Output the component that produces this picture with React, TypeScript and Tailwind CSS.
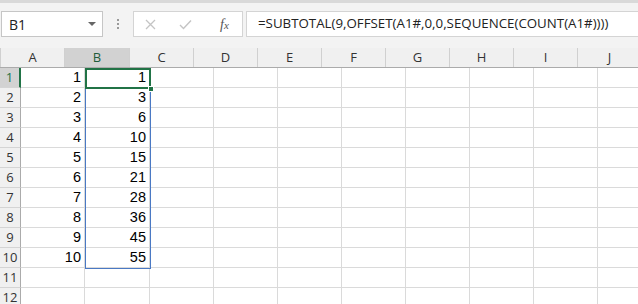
import React from "react";

const cols = ["A", "B", "C", "D", "E", "F", "G", "H", "I", "J"];
const colW = [64, 65, 64, 64, 64, 64, 64, 64, 64, 64];
const aVals = [1, 2, 3, 4, 5, 6, 7, 8, 9, 10];
const bVals = [1, 3, 6, 10, 15, 21, 28, 36, 45, 55];

export default function App() {
  const rows = Array.from({ length: 12 }, (_, i) => i + 1);
  return (
    <div className="w-[638px] h-[304px] overflow-hidden bg-[#f3f3f3] relative" style={{ fontFamily: "'Open Sans', 'Noto Sans', sans-serif" }}>
      <div className="h-[3px] bg-[#d9d9d9]" />
      {/* formula bar row */}
      <div className="flex items-center h-[45px] pt-[7px] pb-[10px]">
        <div className="ml-[1px] w-[102px] h-[26px] bg-white border border-[#c6c6c6] flex items-center justify-between pl-[7px] pr-[6px]">
          <span className="text-[14px] text-[#222]">B1</span>
          <svg width="8" height="5" viewBox="0 0 8 5"><path d="M0 0 L8 0 L4 4 Z" fill="#666" /></svg>
        </div>
        <div className="w-[30px] flex flex-col items-center gap-[2px]">
          <div className="w-[2px] h-[2px] bg-[#9a9a9a]" />
          <div className="w-[2px] h-[2px] bg-[#9a9a9a]" />
          <div className="w-[2px] h-[2px] bg-[#9a9a9a]" />
        </div>
        <div className="w-[110px] h-[26px] bg-white border border-[#d4d4d4] flex items-center">
          <svg className="ml-[11px]" width="11" height="11" viewBox="0 0 11 11"><path d="M1 1 L10 10 M10 1 L1 10" stroke="#c4c4c4" strokeWidth="1.3" /></svg>
          <svg className="ml-[23px]" width="13" height="11" viewBox="0 0 13 11"><path d="M1 6 L4.5 9.5 L12 1.5" stroke="#c4c4c4" strokeWidth="1.4" fill="none" /></svg>
          <span className="ml-[28px] text-[14px] italic text-[#555]" style={{ fontFamily: "'Liberation Serif', serif" }}>f<span className="text-[11px]">x</span></span>
        </div>
        <div className="ml-[3px] flex-1 h-[26px] bg-white border border-[#d4d4d4] border-r-0 flex items-center pl-[11px]">
          <span className="text-[13.3px] text-[#222] whitespace-nowrap">=SUBTOTAL(9,OFFSET(A1#,0,0,SEQUENCE(COUNT(A1#))))</span>
        </div>
      </div>
      {/* grid */}
      <div className="relative">
        <div className="flex h-[20px] bg-[#f0f0f0] border-b border-[#ababab]">
          <div className="w-[21px] h-full relative border-r border-[#d0d0d0]">
            <svg className="absolute right-[3px] bottom-[3px]" width="11" height="11" viewBox="0 0 11 11"><path d="M11 0 L11 11 L0 11 Z" fill="#c3c3c3" /></svg>
          </div>
          {cols.map((c, i) => (
            <div
              key={c}
              className={`h-full shrink-0 flex items-center justify-center text-[13px] border-r border-[#d0d0d0] ${c === "B" ? "bg-[#d2d2d2] text-[#1f5c3a]" : "text-[#333]"}`}
              style={{ width: colW[i] }}
            >
              {c}
            </div>
          ))}
        </div>
        {rows.map((r) => (
          <div key={r} className="flex h-[20px] bg-white">
            <div className={`w-[21px] shrink-0 flex items-center justify-center text-[13px] border-b border-[#d4d4d4] ${r === 1 ? "bg-[#d2d2d2] text-[#217346] border-r-2 border-r-[#217346]" : "bg-[#f0f0f0] text-[#333] border-r border-r-[#ababab]"}`}>
              {r}
            </div>
            {cols.map((c, i) => (
              <div
                key={c}
                className="shrink-0 h-full border-r border-b border-[#dadada] flex items-center justify-end pr-[3px] text-[14.5px] text-black"
                style={{ width: colW[i], fontFamily: "'Liberation Sans', sans-serif" }}
              >
                {c === "A" && r <= 10 ? aVals[r - 1] : c === "B" && r <= 10 ? bVals[r - 1] : ""}
              </div>
            ))}
          </div>
        ))}
        {/* spill border */}
        <div className="absolute left-[85px] top-[20px] w-[66px] h-[201px] border border-[#4a79c4] pointer-events-none" />
        {/* active cell */}
        <div className="absolute left-[85px] top-[20px] w-[66px] h-[21px] border-2 border-[#217346] pointer-events-none" />
        <div className="absolute left-[148px] top-[38px] w-[6px] h-[6px] bg-[#217346] border border-white" />
      </div>
    </div>
  );
}
